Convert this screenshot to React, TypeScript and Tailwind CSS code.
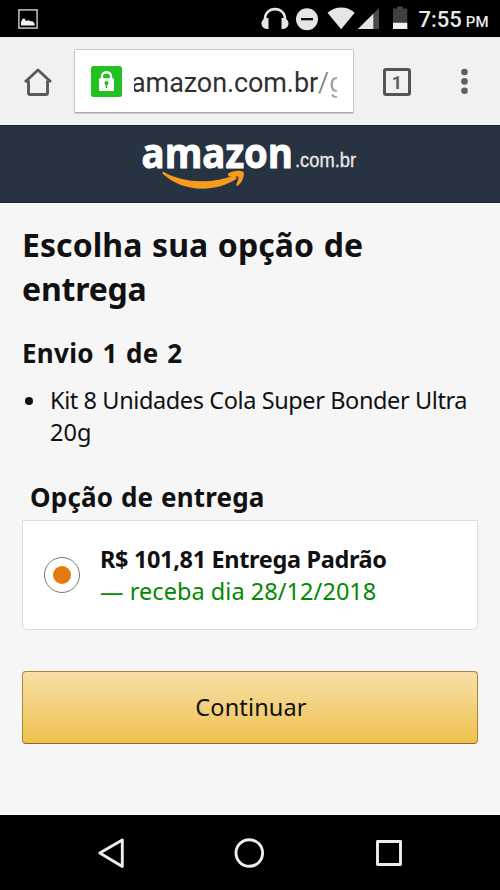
import React from "react";

function StatusBar() {
  return (
    <div className="flex h-[37px] shrink-0 items-start bg-black font-['Roboto',sans-serif] text-[#e8e8e8]">
      <svg className="mt-[9px] ml-[18px] block" width="20" height="20" viewBox="0 0 20 20">
        <rect x="0.9" y="0.9" width="18.2" height="18.2" fill="none" stroke="#c4c4c4" strokeWidth="1.5" />
        <path d="M3 16.5V13.2C3.6 10.6 5.5 8.800 6.500 9.800C7.800 11.300 8 12.400 9 12C10 11 11 10.800 12 12C13 12.800 13.600 11.800 14.700 12.400C16 13.300 16.700 14 16.700 16.500Z" fill="#f2f2f2" />
      </svg>
      <svg className="ml-[223px] block" width="150" height="37" viewBox="261 0 150 37">
        <path d="M265 20C264 5.500 286 5.500 285 20" fill="none" stroke="#e6e6e6" strokeWidth="2.6" />
        <path d="M268.5 18V29C264 29 261.5 27 261.5 23.5S264 18 268.5 18ZM281.500 18V29C286 29 288.500 27 288.500 23.500S286 18 281.500 18Z" fill="#e6e6e6" />
        <circle cx="307" cy="19.300" r="11" fill="#e6e6e6" />
        <rect x="301" y="18" width="12" height="2.300" fill="#111" />
        <path d="M327.500 12.800C335.500 5.600 347 5.600 354.700 12.800L341.100 29.300Z" fill="#e6e6e6" />
        <path d="M379 8V29H358Z" fill="#4a4a4a" />
        <path d="M373.300 13.700V29H358Z" fill="#e6e6e6" />
        <path d="M393 8.500H397V6.500H403V8.500H407.300V29H393Z" fill="#3f3f3f" />
        <rect x="393" y="22.800" width="14.300" height="6.200" fill="#f2f2f2" />
      </svg>
      <div className="ml-[7.500px] flex h-[37px] items-baseline leading-[40px] whitespace-nowrap">
        <span className="text-[22px] font-medium">7:55</span>
        <span className="ml-[4px] text-[15px] font-medium">PM</span>
      </div>
    </div>
  );
}

function BrowserBar() {
  return (
    <div className="flex h-[88px] shrink-0 items-start bg-[#f1f1f1] font-['Roboto',sans-serif]">
      <svg className="mt-[30px] ml-[24px] block" width="28" height="30" viewBox="0 0 28 30">
        <path d="M1 15L14 3L27 15M4.500 13.500V26Q4.500 27.500 6 27.500H22Q23.500 27.500 23.500 26V13.500" fill="none" stroke="#5a5a5a" strokeWidth="2.900" strokeLinejoin="round" />
      </svg>
      <div className="mt-[12px] ml-[22px] flex h-[64px] w-[280px] items-center rounded-[2px] border border-[#c9c9c9] border-b-[#aaa] bg-white shadow-[0_1px_1px_#ccc]">
        <svg className="ml-[16px] block" width="31" height="31" viewBox="0 0 31 31">
          <rect width="31" height="31" rx="2.500" fill="#20c120" />
          <path d="M11 13V10C11 5 20 5 20 10V13" fill="none" stroke="#fff" strokeWidth="2.300" />
          <rect x="8" y="12.200" width="15" height="12.800" rx="1" fill="#fff" />
          <circle cx="15.500" cy="17" r="2" fill="#20c120" />
          <rect x="14.700" y="17" width="1.600" height="5" fill="#20c120" />
        </svg>
        <div className="mt-[3px] ml-[12px] flex h-[40px] w-[203px] overflow-hidden text-[27px] leading-[40px] whitespace-nowrap text-[#303030]">
          <span className="-ml-[3px] tracking-[-0.100px]">amazon.com.br</span>
          <span className="bg-linear-to-r from-[#888] from-30% to-[#ccc] bg-clip-text text-transparent">/g</span>
        </div>
      </div>
      <div className="mt-[31px] ml-[29px] flex h-[28px] w-[28px] items-center justify-center rounded-[3px] border-[3px] border-[#555] text-[18px] font-bold text-[#606060]">1</div>
      <svg className="mt-[30px] ml-[49px] block" width="10" height="30" viewBox="0 0 10 30">
        <circle cx="4.500" cy="5" r="3.300" fill="#606060" />
        <circle cx="4.500" cy="14.400" r="3.300" fill="#606060" />
        <circle cx="4.500" cy="23.800" r="3.300" fill="#606060" />
      </svg>
    </div>
  );
}

function AmazonHeader() {
  return (
    <div className="flex h-[78px] shrink-0 justify-center border-y border-[#1a2430] bg-[#283342]">
      <svg className="block" width="240" height="76" viewBox="130 126 240 76">
        <text x="141.500" y="168" fontFamily="Open Sans" fontWeight="700" fontSize="41" fill="#fff" stroke="#fff" strokeWidth="1" textLength="151.500" lengthAdjust="spacingAndGlyphs">amazon</text>
        <text x="295" y="167" fontFamily="Liberation Sans" fontSize="19.500" fill="#e8e8e8" stroke="#e8e8e8" strokeWidth="0.300" textLength="61" lengthAdjust="spacingAndGlyphs">.com.br</text>
        <path d="M163 171.500C181 182.500 211 185 235 175L237 178.500C214 193.500 182 192 162.500 173.500Z" fill="#f79b1c" />
        <path d="M228 173.500C234 170 240 170 243.700 172C244.500 177.500 241.500 183 237.500 186C236 186 236 184.500 237 182.500C238.500 179 239 177.500 238 176.800C236 175.800 232 176.500 228.500 176.500Z" fill="#f79b1c" />
      </svg>
    </div>
  );
}

export default function App() {
  return (
    <div className="flex h-[890px] w-[500px] flex-col overflow-hidden bg-[#f6f6f6] font-['Noto_Sans','Open_Sans',sans-serif] text-[#111]">
      <StatusBar />
      <BrowserBar />
      <AmazonHeader />
      <main className="h-[612px] shrink-0 px-[22px] pt-[20px] whitespace-nowrap">
        <h1 className="text-[32px] leading-[44px] font-bold">
          <span className="block tracking-[0.050px] [word-spacing:1.300px]">Escolha sua opção de</span>
          <span className="block tracking-[-0.200px]">entrega</span>
        </h1>
        <h2 className="mt-[24px] text-[26px] leading-[36px] font-bold tracking-[0.300px] [word-spacing:1.500px]">Envio 1 de 2</h2>
        <ul className="mt-[13px] flex text-[23.500px] leading-[32px]">
          <li className="flex">
            <span className="mt-[13px] ml-[3px] h-[8px] w-[8px] rounded-full bg-[#111]" />
            <div className="ml-[17px]">
              <div className="tracking-[-0.400px]">Kit 8 Unidades Cola Super Bonder Ultra</div>
              <div>20g</div>
            </div>
          </li>
        </ul>
        <h2 className="mt-[31px] ml-[8px] text-[26px] leading-[36px] font-bold tracking-[0.200px] [word-spacing:0.700px]">Opção de entrega</h2>
        <label className="mt-[5px] flex h-[110px] w-[456px] items-center rounded-b-[5px] border-[1.500px] border-[#ddd] bg-white">
          <span className="ml-[21px] flex h-[36px] w-[36px] items-center justify-center rounded-full border border-[#777] bg-white">
            <span className="h-[18px] w-[18px] rounded-full bg-[#e47911]" />
          </span>
          <div className="ml-[20px] text-[23.500px] leading-[32px]">
            <div className="font-bold tracking-[-0.350px]">R$ 101,81 Entrega Padrão</div>
            <div className="tracking-[0.050px] text-[#008a00]">— receba dia 28/12/2018</div>
          </div>
        </label>
        <button className="mt-[41px] flex h-[73px] w-[456px] items-center justify-center rounded-[4px] border-[1.500px] border-[#a88734] border-b-[#846a29] bg-linear-to-b from-[#f7dfa5] to-[#f0c14b] pl-[2px] text-[23.500px] tracking-[0.150px]">Continuar</button>
      </main>
      <nav className="h-[75px] shrink-0 bg-black">
        <svg className="block" width="500" height="75" viewBox="0 815 500 75" fill="none" stroke="#eee" strokeWidth="2.900" strokeLinejoin="round">
          <path d="M99.800 853L122.300 840V866.500Z" />
          <circle cx="249.300" cy="853" r="13.300" />
          <rect x="377.500" y="841.500" width="23" height="23" />
        </svg>
      </nav>
    </div>
  );
}
